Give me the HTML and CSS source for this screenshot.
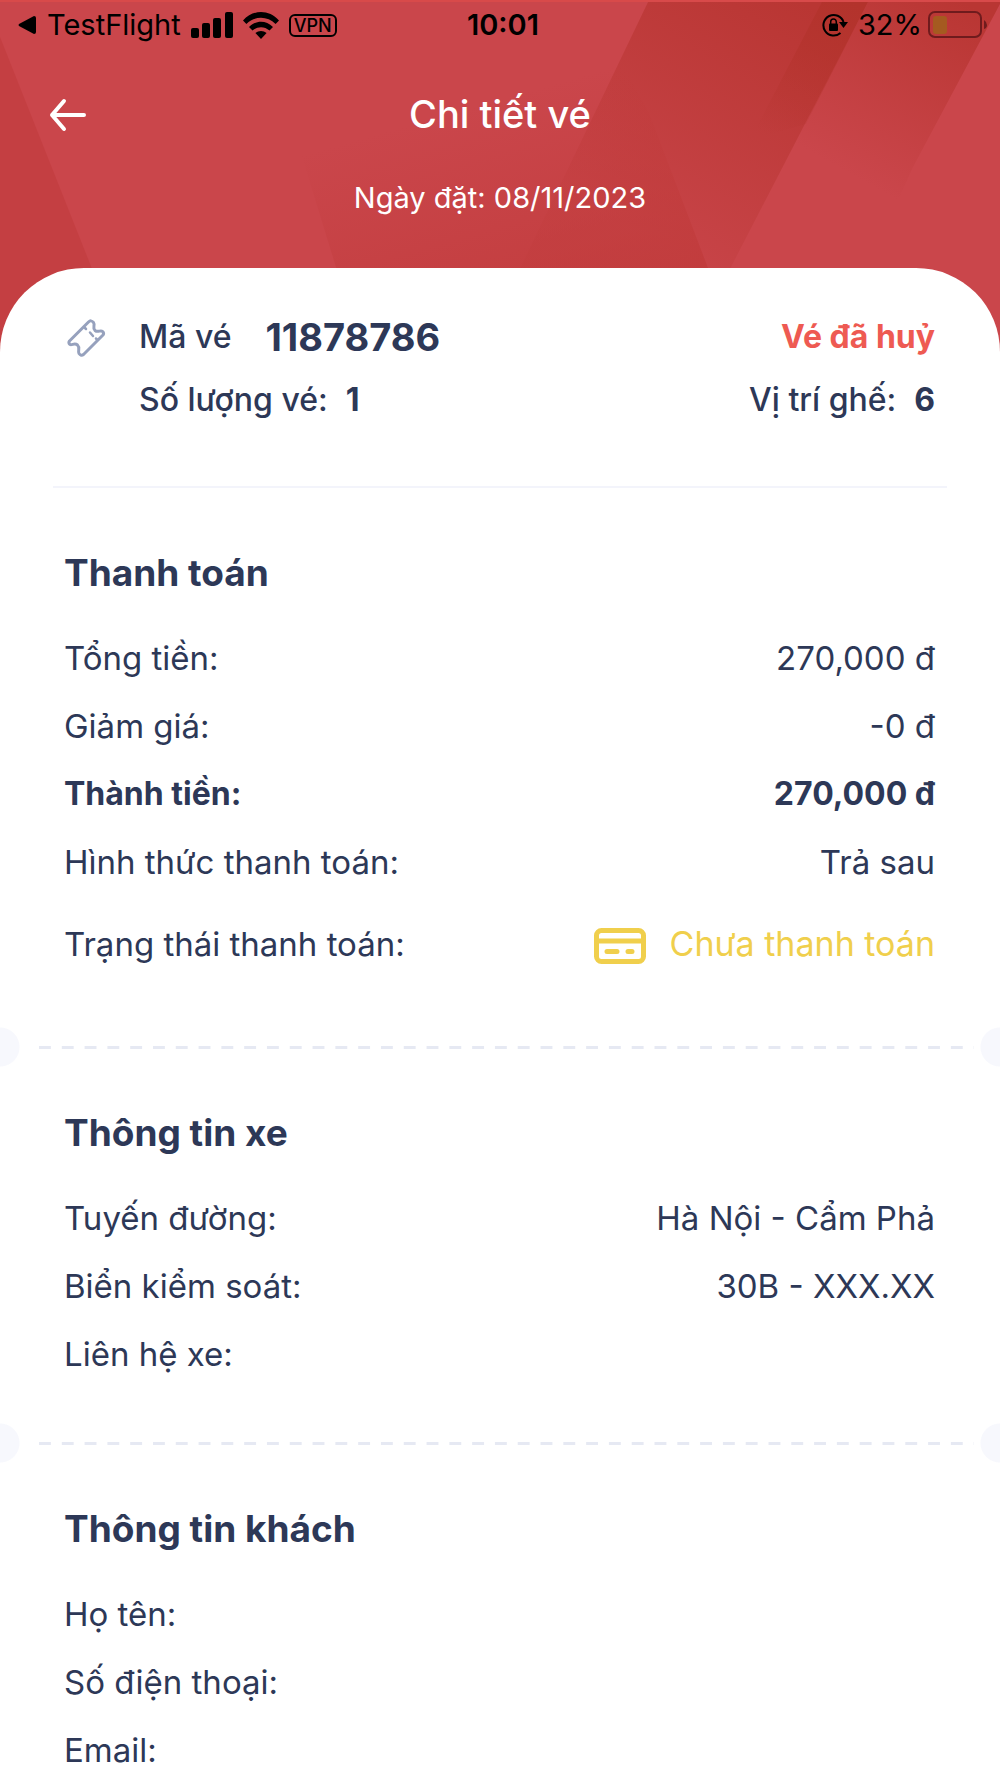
FILE: index.html
```html
<!DOCTYPE html>
<html lang="vi">
<head>
<meta charset="utf-8">
<meta name="viewport" content="width=device-width, initial-scale=1">
<title>Chi tiết vé</title>
<link rel="stylesheet" href="styles.css">
</head>
<body>
<header class="hero">
  <svg class="hero-art" viewBox="0 0 1000 352" preserveAspectRatio="none" aria-hidden="true">
    <defs>
      <linearGradient id="band" gradientUnits="userSpaceOnUse" x1="800" y1="0" x2="650" y2="240">
        <stop offset="0" stop-color="#b93633"/><stop offset="1" stop-color="#b93633" stop-opacity=".15"/>
      </linearGradient>
      <linearGradient id="strip" gradientUnits="userSpaceOnUse" x1="850" y1="0" x2="780" y2="140">
        <stop offset="0" stop-color="#b3332c"/><stop offset="1" stop-color="#b3332c" stop-opacity="0"/>
      </linearGradient>
      <linearGradient id="side" gradientUnits="userSpaceOnUse" x1="960" y1="0" x2="860" y2="180">
        <stop offset="0" stop-color="#b93633"/><stop offset="1" stop-color="#b93633" stop-opacity="0"/>
      </linearGradient>
      <linearGradient id="base" gradientUnits="userSpaceOnUse" x1="700" y1="290" x2="635" y2="60">
        <stop offset="0" stop-color="#c03a3a" stop-opacity=".8"/><stop offset="1" stop-color="#c03a3a" stop-opacity="0"/>
      </linearGradient>
    </defs>
    <path d="M0 37 125 352H0Z" fill="#c43f42"/>
    <path d="M649 0H869L687 352H480Z" fill="url(#band)"/>
    <path d="M823 0H869L806 124 750 140Z" fill="url(#strip)"/>
    <path d="M869 0H1000V4L913 167 880 240 757 217Z" fill="url(#side)"/>
    <path d="M300 150 620 60 649 113 740 352H362Z" fill="url(#base)"/>
    <path d="M0 0H1000V2H0Z" fill="#d84a4a"/>
  </svg>

  <div class="status">
    <div class="status-left">
      <svg width="19" height="18" viewBox="0 0 19 18" aria-hidden="true"><path d="M1 8 16 0Q18 0 18 2V16Q18 18 16 18L1 10Q0 9 1 8Z"/></svg>
      <span class="status-app">TestFlight</span>
      <svg class="signal" width="42" height="26" viewBox="0 0 42 26" aria-hidden="true"><rect y="16" width="8" height="10" rx="2"/><rect x="11" y="11" width="8" height="15" rx="2"/><rect x="22" y="6" width="8" height="20" rx="2"/><rect x="34" width="8" height="26" rx="2"/></svg>
      <svg class="wifi" width="36" height="27" viewBox="0 0 36 27" aria-hidden="true"><path d="M0 8.5C10-2.8 26-2.8 36 8.5L32.6 12C24.500 3.800 11.500 3.800 3.400 12ZM6 15C13 8 23 8 30 15L26.500 18.600C21.500 14 14.500 14 9.500 18.600ZM12.400 21C15.500 18.200 20.500 18.200 23.600 21L18 27Z"/></svg>
      <span class="vpn">VPN</span>
    </div>
    <time class="clock">10:01</time>
    <div class="status-right">
      <svg width="26" height="26" viewBox="0 0 26 26" aria-hidden="true"><path d="M18.500 21A10.300 10.300 0 1 1 21.500 10" fill="none" stroke="#000" stroke-width="2"/><path d="M17 10H26L21.500 16Z"/><rect x="7" y="11.500" width="9" height="7.500" rx="1"/><path d="M8.700 12V9.800a2.800 2.800 0 0 1 5.600 0V12" fill="none" stroke="#000" stroke-width="1.500"/></svg>
      <span class="charge">32%</span>
      <svg width="60" height="28" viewBox="0 0 60 28" aria-hidden="true"><rect x="1" y="1" width="52" height="25" rx="6" fill="none" stroke="#6f1b1d" stroke-width="2"/><rect x="5" y="5" width="14" height="18" rx="3" fill="#a55a20"/><path d="M56 9Q59 11 59 14T56 18Z" fill="#6f1b1d"/></svg>
    </div>
  </div>

  <div class="nav">
    <button class="back" type="button" aria-label="Quay lại">
      <svg width="38" height="36" viewBox="0 0 38 36" aria-hidden="true"><path d="M15 5 3 19 15 33M3 19H35" fill="none" stroke="#fff" stroke-width="4" stroke-linecap="round" stroke-linejoin="round"/></svg>
    </button>
    <h1 class="title">Chi tiết vé</h1>
  </div>
  <p class="booked">Ngày đặt: 08/11/2023</p>
</header>

<main class="sheet">
  <section class="summary">
    <svg class="ticket" width="44" height="44" viewBox="0 0 44 44" fill="none" stroke="#96a1bd" stroke-width="3" stroke-linecap="round" stroke-linejoin="round" aria-hidden="true">
      <path d="M23.500 7 4.500 26Q3 28 5 29.500C7 30.500 9.500 27.500 12.500 30C15.500 33 12.500 35.500 14 38.500Q16 41.500 18.500 39.500L38 20Q39.500 18 37.500 16.500C35.500 14.500 33 18 30 15.500C27 12.500 30.500 10.500 28.500 7.500Q26 4.500 23.500 7Z"/>
      <path d="M19.500 12.500 21 14M25 17.500 28 21M31 23.500 32 24.500" stroke-width="2.500"/>
    </svg>
    <p class="line"><span>Mã vé</span><strong class="code">11878786</strong></p>
    <p class="line state">Vé đã huỷ</p>
    <p class="line count"><span>Số lượng vé:</span><strong>1</strong></p>
    <p class="line seat"><span>Vị trí ghế:</span><strong>6</strong></p>
  </section>

  <section class="block">
    <h2>Thanh toán</h2>
    <dl>
      <div class="row"><dt>Tổng tiền:</dt><dd>270,000 đ</dd></div>
      <div class="row"><dt>Giảm giá:</dt><dd>-0 đ</dd></div>
      <div class="row total"><dt>Thành tiền:</dt><dd>270,000 đ</dd></div>
      <div class="row"><dt>Hình thức thanh toán:</dt><dd>Trả sau</dd></div>
      <div class="row tall"><dt>Trạng thái thanh toán:</dt>
        <dd class="unpaid">
          <svg width="52" height="40" viewBox="0 0 52 40" fill="none" stroke="#f0cf4c" stroke-width="5" aria-hidden="true"><rect x="2.500" y="6.500" width="47" height="31" rx="5"/><path d="M3 17H49"/><path d="M13 27.500H23M34 27.500H38" stroke-linecap="round"/></svg>
          <span>Chưa thanh toán</span>
        </dd>
      </div>
    </dl>
  </section>

  <div class="tear"></div>

  <section class="block">
    <h2>Thông tin xe</h2>
    <dl>
      <div class="row"><dt>Tuyến đường:</dt><dd>Hà Nội - Cẩm Phả</dd></div>
      <div class="row"><dt>Biển kiểm soát:</dt><dd>30B - XXX.XX</dd></div>
      <div class="row"><dt>Liên hệ xe:</dt><dd></dd></div>
    </dl>
  </section>

  <div class="tear"></div>

  <section class="block last">
    <h2>Thông tin khách</h2>
    <dl>
      <div class="row"><dt>Họ tên:</dt><dd></dd></div>
      <div class="row"><dt>Số điện thoại:</dt><dd></dd></div>
      <div class="row"><dt>Email:</dt><dd></dd></div>
    </dl>
  </section>
</main>
</body>
</html>
```

FILE: styles.css
```css
* {
  box-sizing: border-box;
}

body,
h1,
h2,
p,
dl,
dd {
  margin: 0;
}

body {
  background: #fff;
  color: #2d3857;
  font-family: Inter, "Noto Sans", sans-serif;
  font-size: 32px;
  line-height: 40px;
}

svg {
  flex: none;
  display: block;
}

/* Header */
.hero {
  position: relative;
  background: #ca464b;
  color: #fff;
  padding-bottom: 134px;
}

.hero-art {
  position: absolute;
  inset: 0;
  width: 100%;
  height: 100%;
}

.status {
  position: relative;
  display: grid;
  grid-template-columns: 1fr auto 1fr;
  align-items: center;
  height: 50px;
  padding: 0 12px 0 18px;
  color: #000;
  font-size: 29px;
}

.status-left,
.status-right {
  display: flex;
  align-items: center;
}

.status-right {
  justify-content: flex-end;
}

.status-app {
  margin-left: 10px;
}

.signal {
  margin-left: 10px;
}

.wifi {
  margin-left: 10px;
}

.vpn {
  margin-left: 10px;
  width: 48px;
  height: 23px;
  border: 2px solid #000;
  border-radius: 6px;
  font-size: 18px;
  font-weight: 500;
  line-height: 19px;
  text-align: center;
}

.clock {
  font-weight: 600;
}

.charge {
  margin: 0 6px 0 10px;
}

.nav {
  position: relative;
  display: grid;
  grid-template-columns: 60px 1fr 60px;
  align-items: center;
  height: 80px;
  margin-top: 24px;
  padding: 0 49px;
}

.back {
  padding: 0;
  border: 0;
  background: none;
  cursor: pointer;
}

.title {
  font-size: 38px;
  font-weight: 500;
  text-align: center;
}

.booked {
  position: relative;
  margin-top: 24px;
  font-size: 29px;
  text-align: center;
}

/* Ticket sheet */
.sheet {
  position: relative;
  margin-top: -84px;
  border-radius: 84px 84px 0 0;
  background: #fff;
}

.summary {
  display: grid;
  grid-template-columns: 44px auto 1fr;
  column-gap: 30px;
  row-gap: 21px;
  align-items: center;
  margin: 0 53px;
  padding: 47px 12px 66px;
  border-bottom: 2px solid #f3f4fb;
  font-weight: 500;
}

.line {
  display: flex;
  align-items: center;
  gap: 18px;
}

.line strong {
  font-weight: 700;
}

.line .code {
  margin-left: 16px;
  font-size: 38px;
}

.state,
.seat {
  justify-content: flex-end;
}

.state {
  color: #ee5a52;
  font-weight: 700;
}

.count {
  grid-column: 2;
}

.block {
  padding: 36px 65px 49px 64px;
}

.summary + .block {
  padding-top: 55px;
}

.block.last {
  padding-bottom: 0;
}

h2 {
  font-size: 37px;
  font-weight: 700;
  line-height: 60px;
}

dl {
  display: flex;
  flex-direction: column;
  gap: 28px;
  margin-top: 35px;
}

.row {
  display: flex;
  align-items: center;
  justify-content: space-between;
  font-size: 33px;
}

.total {
  font-size: 32px;
  font-weight: 700;
}

.tall {
  min-height: 68px;
}

.unpaid {
  display: flex;
  align-items: center;
  gap: 24px;
  color: #f0cf4c;
  font-size: 34px;
}

/* Perforated line with a punched half circle at each edge */
.tear {
  display: flex;
  align-items: center;
  justify-content: space-between;
  height: 40px;
  background:
    radial-gradient(circle at 0 50%, #f7f8fd 19px, transparent 20px),
    radial-gradient(circle at 100% 50%, #f7f8fd 19px, transparent 20px);
}

.tear::before {
  content: "";
  flex: 1;
  height: 3px;
  margin: 0 26px 0 39px;
  background: linear-gradient(90deg, #e6e9f3 12px, transparent 12px) 0 0 / 23px 3px round;
}
```
